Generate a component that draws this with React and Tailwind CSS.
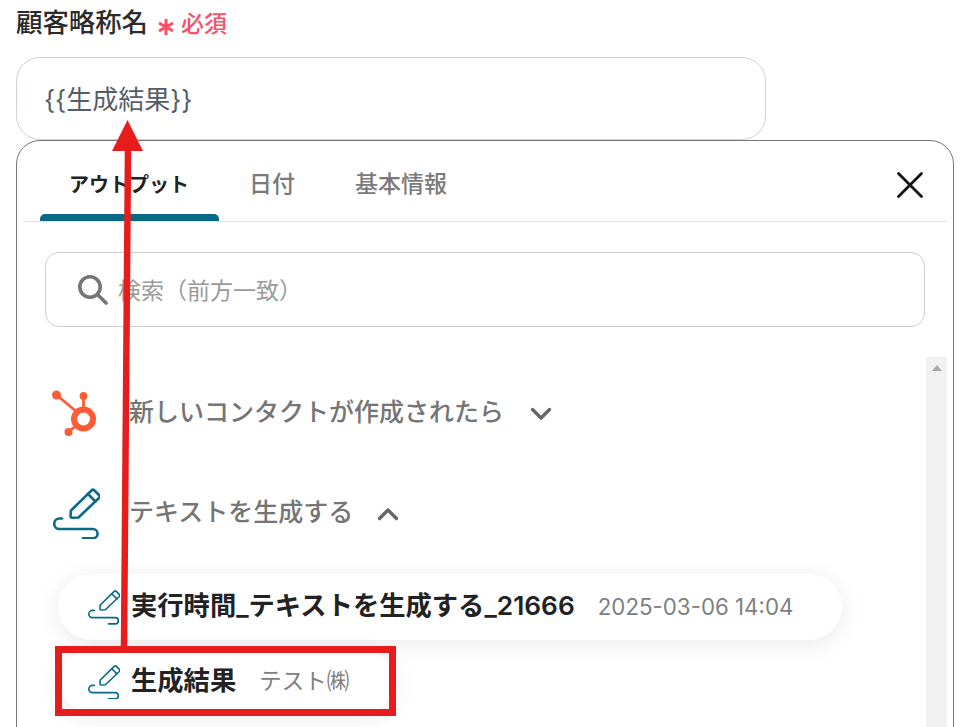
import React from "react";

function HubspotIcon() {
  return (
    <svg width="50" height="50" viewBox="0 0 50 50" fill="none">
      <circle cx="33.5" cy="32" r="9.5" stroke="#ff5c35" strokeWidth="6" />
      <circle cx="33.5" cy="9" r="3.9" fill="#ff5c35" />
      <circle cx="6.5" cy="8" r="4.5" fill="#ff5c35" />
      <circle cx="18.5" cy="45" r="4" fill="#ff5c35" />
      <path d="M33.5 10V22M6.5 8L27 25M18.5 45L28 37" stroke="#ff5c35" strokeWidth="2.8" />
    </svg>
  );
}

function PenIcon({ size = 47, stroke = 2.6 }) {
  return (
    <svg width={size} height={size * 1.106} viewBox="12 7 47 52" fill="none" stroke="#0a6a85" strokeWidth={stroke} strokeLinecap="round" strokeLinejoin="round">
      <path d="M30 30.500L50.500 10.500Q52 9 53.500 10.500L58 15Q59.500 16.500 58 18L37.500 37.500L31.500 37.800Q29.500 37.800 29.500 36Z" />
      <path d="M47 14L54.500 21.500" />
      <path d="M21 38.500H18.500a5.300 5.300 0 0 0 0 10.600H52a4.600 4.600 0 0 1 0 9.200H42" />
    </svg>
  );
}

function Pill({ width, height, children, className = "" }) {
  return (
    <div
      className={`flex items-center rounded-full bg-white shadow-[0_4px_24px_rgba(0,0,0,0.09)] ${className}`}
      style={{ width, height }}
    >
      {children}
    </div>
  );
}

export default function App() {
  return (
    <div className="relative h-[727px] w-[978px] overflow-hidden bg-white font-['Inter','Noto_Sans_CJK_JP',sans-serif] text-[#222]">
      <div className="pl-4 pr-[24px] pt-[6px]">
        {/* label */}
        <div className="flex h-[30px] items-center">
          <span className="pt-[2px] text-[26.4px] font-medium leading-none text-[#2b2b2b]">顧客略称名</span>
          <svg className="ml-[9px] mt-[12px]" width="18" height="18" viewBox="0 0 18 18" stroke="#ff4d63" strokeWidth="3">
            <path d="M9 1V17M2 5L16 13M16 5L2 13" />
          </svg>
          <span className="ml-[6px] pt-[6px] text-[23px] font-medium leading-none text-[#ff4d63]">必須</span>
        </div>

        {/* input */}
        <div className="mt-[21px] flex h-[83px] w-[750px] items-center rounded-[24px] border border-[#cdd1da] pl-[27px] pt-[1px] text-[26px] text-[#555e68]">
          {"{{生成結果}}"}
        </div>

        {/* panel */}
        <div className="h-[600px] rounded-t-[24px] border border-[#777] px-[6px]">
          <div className="flex h-[81px] border-b border-[#e3e3e3] pl-[17px]">
            <div className="relative flex h-full items-center pl-[29px] pr-[30px] pt-[7px] text-[20px] font-semibold text-[#222]">
              アウトプット
              <div className="absolute bottom-0 left-0 right-0 h-[7px] rounded-t-[5px] bg-[#0a6a85]" />
            </div>
            <div className="flex items-center px-[30px] pt-[7px] text-[23px] font-medium text-[#7a7a7a]">日付</div>
            <div className="flex items-center px-[30px] pt-[7px] text-[23px] font-medium text-[#7a7a7a]">基本情報</div>
            <div className="ml-auto mr-[24px] flex items-center pt-[8px]">
              <svg width="26" height="26" viewBox="0 0 26 26" stroke="#111" strokeWidth="2.800" strokeLinecap="round">
                <path d="M1.500 1.500L24.500 24.500M24.500 1.500L1.500 24.500" />
              </svg>
            </div>
          </div>

          <div className="px-[22px] pt-[30px]">
            <div className="flex h-[75px] w-[880px] items-center gap-[10px] rounded-[14px] border border-[#cfcfcf] pl-[32px] text-[23px] text-[#9a9a9a]">
              <svg width="30" height="30" viewBox="0 0 30 30" fill="none" stroke="#757575" strokeWidth="3.6" strokeLinecap="round">
                <circle cx="12" cy="12" r="10.2" />
                <path d="M20 20L28 28" />
              </svg>
              <span className="pt-[4px]">検索（前方一致）</span>
            </div>
          </div>

          <div className="mt-[30px] flex">
            <div className="min-w-0 flex-1 pl-[27px] pt-[30px]">
              <div className="flex h-[50px] items-center">
                <div className="flex w-[50px] justify-end"><HubspotIcon /></div>
                <span className="ml-[29px] pt-[2px] text-[25px] font-medium text-[#757575]">新しいコンタクトが作成されたら</span>
                <svg className="ml-[26px] mt-[3px]" width="22" height="14" viewBox="0 0 22 14" fill="none" stroke="#666" strokeWidth="3.400" strokeLinecap="round" strokeLinejoin="round">
                  <path d="M2.500 2.500L11 11L19.500 2.500" />
                </svg>
              </div>
              <div className="mt-[51px] flex h-[50px] items-center">
                <div className="flex w-[50px] justify-end"><PenIcon /></div>
                <span className="ml-[29px] text-[25px] font-medium text-[#757575]">テキストを生成する</span>
                <svg className="ml-[24px] mt-[1px]" width="22" height="14" viewBox="0 0 22 14" fill="none" stroke="#666" strokeWidth="3.400" strokeLinecap="round" strokeLinejoin="round">
                  <path d="M2.500 11.500L11 3L19.500 11.500" />
                </svg>
              </div>

              <div className="ml-[8px] mt-[36px]">
                <Pill width={784} height={66} className="pl-[30px]">
                  <PenIcon size={32} stroke={2.4} />
                  <span className="ml-[11px] pb-[2px] text-[26.3px] font-semibold text-[#222]">実行時間_テキストを生成する_21666</span>
                  <span className="ml-[23px] text-[22.3px] text-[#808080]">2025-03-06 14:04</span>
                </Pill>
                <Pill width={335} height={63} className="ml-[2px] mt-[10px] pl-[28px]">
                  <PenIcon size={32} stroke={2.4} />
                  <span className="ml-[11px] pb-[2px] text-[26.3px] font-semibold text-[#222]">生成結果</span>
                  <span className="ml-[23px] pb-[2px] text-[22.5px] text-[#808080]">テスト㈱</span>
                </Pill>
              </div>
            </div>

            {/* scrollbar */}
            <div className="flex h-[370px] w-[21px] justify-center bg-[#f1f1f1] pt-[8px]">
              <div className="h-0 w-0 border-x-[5px] border-b-[6px] border-x-transparent border-b-[#a8a8a8]" />
            </div>
          </div>
        </div>
      </div>

      {/* annotation arrow and box */}
      <svg className="pointer-events-none absolute left-0 top-0" width="978" height="727" viewBox="0 0 978 727">
        <path d="M128 150L124 648" stroke="#e71c1c" strokeWidth="6.500" fill="none" />
        <path d="M127.500 120L143 151H112Z" fill="#e71c1c" />
      </svg>
      <div className="pointer-events-none absolute left-[55px] top-[646px] h-[70px] w-[341px] border-[7px] border-[#e71c1c]" />
    </div>
  );
}
